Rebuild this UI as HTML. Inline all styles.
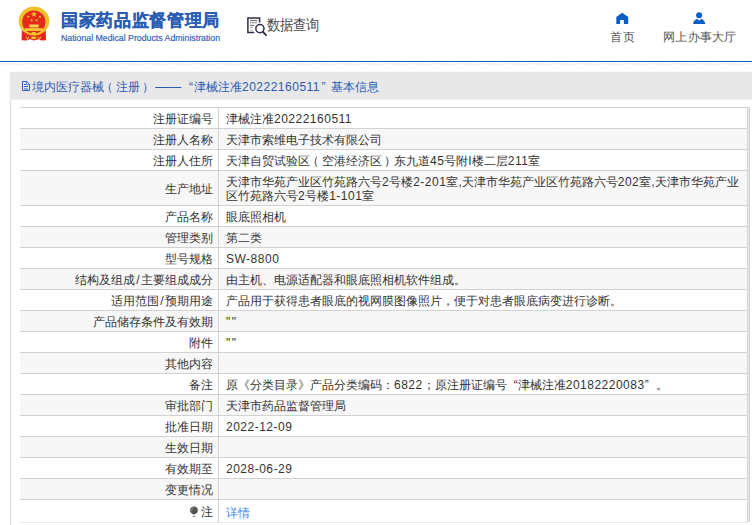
<!DOCTYPE html>
<html><head><meta charset="utf-8">
<style>
html,body{margin:0;padding:0;background:#fff;}
body{width:752px;height:525px;overflow:hidden;position:relative;font-family:"Liberation Sans",sans-serif;color:#333;}
.abs{position:absolute;}
#emblem{left:16px;top:5px;width:36px;height:38px;}
#t1{left:61px;top:11px;font-size:17px;font-weight:bold;color:#2a5cb3;-webkit-text-stroke:0.25px #2a5cb3;line-height:20px;white-space:nowrap;letter-spacing:0.65px;}
#t2{left:61px;top:32px;font-size:8.75px;color:#2a5cb3;-webkit-text-stroke:0.15px #2a5cb3;line-height:12px;white-space:nowrap;}
#dq{left:244px;top:12px;width:26px;height:26px;}
#dqt{left:267px;top:14px;font-size:14px;color:#4a4a4a;line-height:20px;white-space:nowrap;transform:scale(0.92,1.04);transform-origin:0 0;}
#home{left:610px;top:8px;width:24px;height:20px;}
#homet{left:610px;top:29px;font-size:12px;color:#555;line-height:16px;white-space:nowrap;letter-spacing:1px;}
#user{left:688px;top:8px;width:24px;height:20px;}
#usert{left:663px;top:29px;font-size:12px;color:#555;line-height:16px;white-space:nowrap;letter-spacing:0.3px;}
#bline{left:0;top:61px;width:752px;height:1px;background:#0b5cc0;}
#hatch{left:0;top:63px;width:752px;height:1px;background:repeating-linear-gradient(90deg,#e6e6e6 0 1px,#fff 1px 3px);}
#hatch2{left:0;top:64px;width:752px;height:1px;background:repeating-linear-gradient(90deg,#fff 0 2px,#e0e0e0 2px 3px);}
#box{left:10px;top:72px;width:760px;height:460px;border-left:1px solid #e2e2e2;box-shadow:0 0 2px rgba(0,0,0,0.05);}
#boxhd{left:10px;top:72px;width:742px;height:27px;background:#e8e8e8;border-bottom:1px solid #eef0f6;}
#title,.tt{left:22px;top:73px;font-size:12px;line-height:28px;color:#2a5cb3;white-space:nowrap;}
table{position:absolute;left:20px;top:107px;width:728px;border-spacing:0;border-top:1px solid #d3d2d2;font-size:12px;line-height:14px;}
td{border-bottom:1px solid #d3d2d2;border-right:1px solid #d3d2d2;padding:4px 2px 2px 7px;color:#333;vertical-align:middle;}
td.l{width:193px;text-align:right;padding:4px 5px 2px 0;}
tr:nth-child(even) td{background:#f7f7f7;}
tr.last td{height:16px;border-bottom:1px solid #e8eaf0;}
.n{letter-spacing:0.5px;}
.sl{padding:0 1.5px;}
.qo{padding-left:7px;}
.qc{padding-right:7px;}
a{color:#3d86ee;text-decoration:none;position:relative;top:1px;}
#rl1{left:748px;top:107px;width:1px;height:415px;background:#e8eaf2;border-top:1px solid #d3d2d2;box-sizing:border-box;}
#rl2{left:749px;top:107px;width:1px;height:415px;background:#d3d2d2;}
</style></head><body>
<svg id="emblem" class="abs" viewBox="16 5 36 38">
  <path d="M21.8 30.5 L45.8 30.5 L46 40.2 L41.5 40.6 L38 39.2 L34 40.6 L30 39.2 L26.5 40.6 L21.6 40.2 Z" fill="#e3261c"/>
  <ellipse cx="34" cy="21" rx="15.4" ry="14.6" fill="#f1c12c"/>
  <circle cx="33.8" cy="22" r="11.6" fill="#e62a1e"/>
  <path d="M28.4 25.6 L29.6 24.5 H38.4 L39.6 25.6 Z M29.5 25.5 H38.5 V27.6 H29.5 Z" fill="#f6d24c"/>
  <path d="M24.9 28.2 H42.8 V30.9 H24.9 Z" fill="#f4cc30"/>
  <ellipse cx="33.7" cy="33.4" rx="2.5" ry="1.3" fill="#f4cc30"/>
  <ellipse cx="33.7" cy="37.8" rx="2.8" ry="1.4" fill="#f1c12c"/>
  <path d="M26.3 36.6 L27.6 39.6 L29 36.6 M38.2 36.6 L39.5 39.6 L40.8 36.6" stroke="#f1c12c" stroke-width="1" fill="none"/>
  <polygon points="34,11.4 34.85,13.3 36.9,13.4 35.3,14.7 35.8,16.8 34,15.6 32.2,16.8 32.7,14.7 31.1,13.4 33.15,13.3" fill="#e8cc28"/>
  <circle cx="28.2" cy="16.7" r="1.05" fill="#dcc334"/>
  <circle cx="39.9" cy="16.7" r="1.05" fill="#dcc334"/>
  <circle cx="31.6" cy="20.2" r="1.05" fill="#dcc334"/>
  <circle cx="36.5" cy="20.2" r="1.05" fill="#dcc334"/>
</svg>
<div id="t1" class="abs">国家药品监督管理局</div>
<div id="t2" class="abs">National Medical Products Administration</div>
<svg id="dq" class="abs" viewBox="244 12 26 26">
  <path d="M259.6 22.6 V17.9 H247.9 V32.6 H254.2" fill="none" stroke="#2f2f45" stroke-width="1.5"/>
  <path d="M250 20.4 H257" stroke="#555" stroke-width="0.9"/>
  <path d="M250 22.6 H257" stroke="#aaa" stroke-width="1.6"/>
  <path d="M250 25.4 H254.4" stroke="#555" stroke-width="0.9"/>
  <path d="M250 27.4 H253" stroke="#999" stroke-width="0.9"/>
  <path d="M250 30.3 H253" stroke="#aaa" stroke-width="0.9"/>
  <circle cx="259.9" cy="28.6" r="4.1" fill="none" stroke="#2d2d42" stroke-width="1.5"/>
  <path d="M263 31.8 L266 35.2" stroke="#2d2d42" stroke-width="1.8" stroke-linecap="round"/>
</svg>
<div id="dqt" class="abs">数据查询</div>
<svg id="home" class="abs" viewBox="610 8 24 20">
  <path d="M622.2 12.8 L628.2 17 V23.9 H623.9 V20 H620.1 V23.9 H616.3 V17 Z" fill="#0a5ec8"/>
</svg>
<div id="homet" class="abs">首页</div>
<svg id="user" class="abs" viewBox="688 8 24 20">
  <circle cx="699.1" cy="15.2" r="3" fill="#0a5ec8"/>
  <path d="M693.1 24 Q693.3 19.6 697.6 18.9 L699.3 20.8 L700.9 18.9 Q705 19.6 705.2 24 Z" fill="#0a5ec8"/>
</svg>
<div id="usert" class="abs">网上办事大厅</div>
<div id="bline" class="abs"></div>
<div id="hatch" class="abs"></div><div id="hatch2" class="abs"></div>
<div id="box" class="abs"></div>
<div id="boxhd" class="abs"></div>
<div id="title" class="abs"><svg width="10" height="12" viewBox="22 80 10 12" style="vertical-align:-1px"><path d="M22.5 81.5 H26.8 L29.5 84.2 V90.5 H22.5 Z" fill="none" stroke="#2a62c8" stroke-width="1"/><path d="M26.5 81.5 V84.5 H29.5" fill="none" stroke="#2a62c8" stroke-width="0.7"/><path d="M24 84.5 H26 M24 86.5 H28 M24 89 H28" stroke="#2a62c8" stroke-width="1"/></svg>境内医疗器械</div>
<div class="abs tt" style="left:101px">（</div>
<div class="abs tt" style="left:116px">注册</div>
<div class="abs tt" style="left:142px">）</div>
<div class="abs tt" style="left:155px;transform:scaleX(1.09);transform-origin:0 0">——</div>
<div class="abs tt" style="left:189px">“</div>
<div class="abs tt" style="left:194px">津械注准<span class="n">20222160511</span></div>
<div class="abs tt" style="left:321.5px">”</div>
<div class="abs tt" style="left:331px">基本信息</div>
<table>
<tr><td class="l">注册证编号</td><td>津械注准<span class="n">20222160511</span></td></tr>
<tr><td class="l">注册人名称</td><td>天津市索维电子技术有限公司</td></tr>
<tr><td class="l">注册人住所</td><td>天津自贸试验区<span style="position:relative;left:-3px">（</span>空港经济区<span style="position:relative;left:1.5px">）</span>东九道<span class="n">45</span>号附I楼二层<span class="n">211</span>室</td></tr>
<tr><td class="l">生产地址</td><td>天津市华苑产业区竹苑路六号<span class="n">2</span>号楼<span class="n">2-201</span>室,天津市华苑产业区竹苑路六号<span class="n">202</span>室,天津市华苑产业区竹苑路六号<span class="n">2</span>号楼<span class="n">1-101</span>室</td></tr>
<tr><td class="l">产品名称</td><td>眼底照相机</td></tr>
<tr><td class="l">管理类别</td><td>第二类</td></tr>
<tr><td class="l">型号规格</td><td><span class="n">SW-8800</span></td></tr>
<tr><td class="l">结构及组成<span class="sl">/</span>主要组成成分</td><td>由主机、电源适配器和眼底照相机软件组成。</td></tr>
<tr><td class="l">适用范围<span class="sl">/</span>预期用途</td><td>产品用于获得患者眼底的视网膜图像照片，便于对患者眼底病变进行诊断。</td></tr>
<tr><td class="l">产品储存条件及有效期</td><td><span style="letter-spacing:1.6px">""</span></td></tr>
<tr><td class="l">附件</td><td><span style="letter-spacing:1.6px">""</span></td></tr>
<tr><td class="l">其他内容</td><td></td></tr>
<tr><td class="l">备注</td><td>原《分类目录》产品分类编码：<span class="n">6822</span>；原注册证编号<span class="qo">“</span>津械注准<span class="n">20182220083</span><span class="qc">”</span>。</td></tr>
<tr><td class="l">审批部门</td><td>天津市药品监督管理局</td></tr>
<tr><td class="l">批准日期</td><td><span class="n">2022-12-09</span></td></tr>
<tr><td class="l">生效日期</td><td></td></tr>
<tr><td class="l">有效期至</td><td><span class="n">2028-06-29</span></td></tr>
<tr><td class="l">变更情况</td><td></td></tr>
<tr class="last"><td class="l"><svg width="9" height="12" viewBox="189 505 9 12" style="vertical-align:-1px;margin-right:3px"><circle cx="194" cy="510.2" r="3.8" fill="#555"/><path d="M191.6 511 Q191.6 508.2 193.6 507.4" stroke="#9aa" stroke-width="0.7" fill="none"/><path d="M190.6 511.5 L194 515 L197.4 511.5 Z" fill="#555"/><path d="M192.6 516.6 H195.3" stroke="#666" stroke-width="0.8"/></svg>注</td><td><a>详情</a></td></tr>
</table>
<div id="rl1" class="abs"></div>
<div id="rl2" class="abs"></div>
</body></html>
